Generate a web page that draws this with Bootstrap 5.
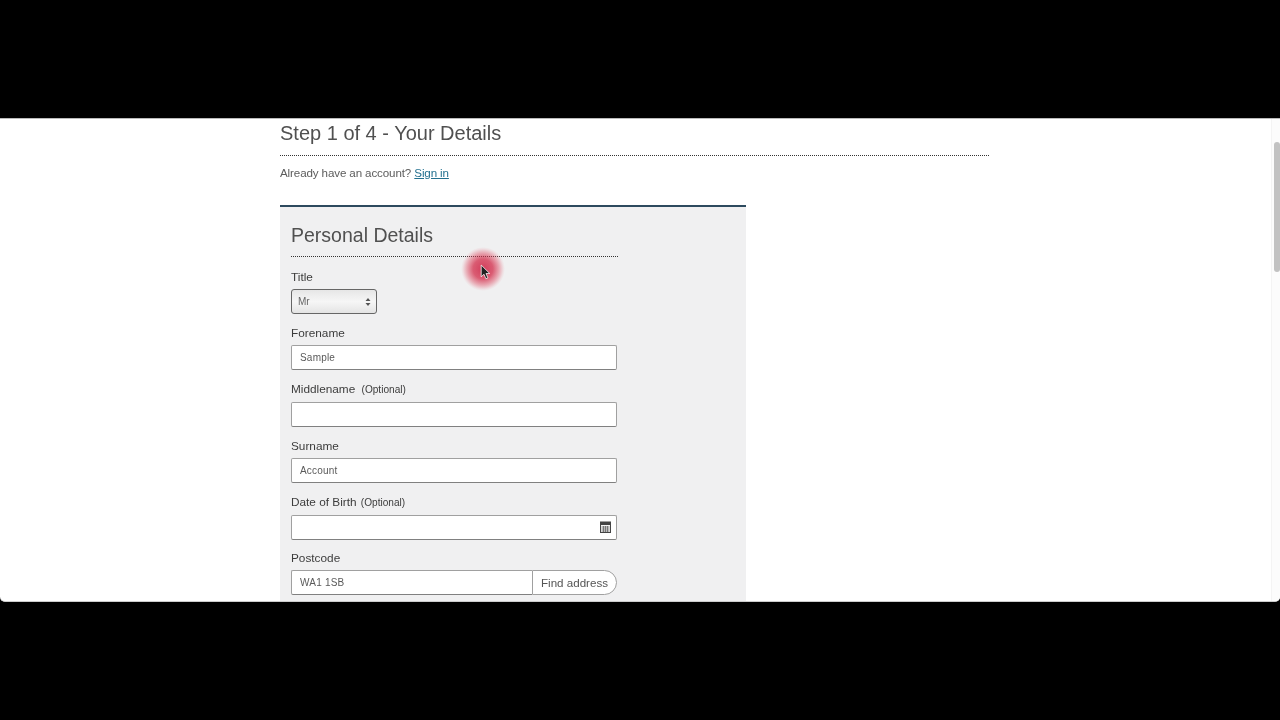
<!DOCTYPE html>
<html lang="en">
<head>
<meta charset="utf-8">
<title>Step 1 of 4 - Your Details</title>
<link rel="stylesheet" href="https://cdn.jsdelivr.net/npm/bootstrap@5.3.0/dist/css/bootstrap.min.css">
<style>
html, body { height: 720px; overflow: hidden; background: #000; }
body { font-family: "Liberation Sans", Arial, sans-serif; color: #444; }
.screen { margin-top: 118px; height: 484px; background: #fff; border-top: 1px solid #bbb; border-bottom: 1px solid #ccc; border-radius: 0 0 5px 5px; overflow: hidden; position: relative; filter: blur(.3px); }
.page-col { width: 709px; margin-left: 280px; }
.step-title { font-size: 20px; line-height: 28px; font-weight: 400; color: #505050; margin: 0; height: 36px; }
.dot-rule { border: 0; border-top: 1px dotted #333; opacity: 1; margin: 0; }
.account { font-size: 11.6px; line-height: 16px; margin: 9px 0 24px; color: #5c5c5c; letter-spacing: -.12px; }
.account a { color: #23708f; }
.panel-box { width: 466px; background: #f0f0f1; border-top: 2px solid #2d4a5e; padding: 14px 11px 0; height: 420px; }
.panel-inner { width: 327px; }
.panel-title { font-size: 19.5px; line-height: 28px; font-weight: 400; color: #505050; margin: 0; height: 35px; }
.field-label { display: block; font-size: 11.8px; line-height: 14px; color: #3c3c3c; margin: 0 0 5px; }
.field-label span { font-size: 10.1px; margin-left: 3px; }
.field-label .tight-note { margin-left: 1px; }
.field-block { height: 56.3px; }
.first-field { padding-top: 13px; height: 69px; }
.field-input { height: 25px; border: 1px solid #a0a0a0; border-bottom-color: #808080; border-radius: 2px; background: #fff; font-size: 10px; line-height: 23px; color: #5a5a5a; padding: 0 8px; letter-spacing: .2px; }
.field-width { width: 326px; }
.select-box { width: 86px; height: 25px; border: 1px solid #666; border-radius: 3px; background: linear-gradient(#e6e6e6, #f6f6f6 50%, #e4e4e4); font-size: 10px; color: #666; padding: 0 5px 0 6px; }
.addon-btn { width: 85px; height: 25px; border: 1px solid #a0a0a0; border-radius: 0 12.5px 12.5px 0; background: #fff; font-size: 11.6px; color: #555; line-height: 23px; text-align: center; flex: none; }
.postcode-input { border-right: 0; border-radius: 2px 0 0 2px; }
.date-input { padding-right: 5px; }
.scroll-track { position: absolute; top: 0; right: 0; width: 9px; height: 100%; background: #fcfcfc; border-left: 1px solid #f4f4f4; }
.scroll-thumb { position: absolute; top: 23px; left: 2px; width: 6px; height: 130px; background: #c2c2c2; border-radius: 3px; }
.click-halo { position: absolute; left: 460.5px; top: 128px; width: 44px; height: 44px; border-radius: 50%; background: radial-gradient(circle closest-side, rgba(205,30,65,.85) 0, rgba(210,40,70,.74) 45%, rgba(220,60,85,.42) 72%, rgba(230,90,110,.1) 92%, rgba(230,90,110,0) 100%); }
.cursor-arrow { position: absolute; left: 480px; top: 145px; }
</style>
</head>
<body>
<div class="screen">
  <div class="page-col">
    <h1 class="step-title">Step 1 of 4 - Your Details</h1>
    <hr class="dot-rule">
    <p class="account">Already have an account? <a href="#">Sign in</a></p>
    <div class="panel-box">
      <div class="panel-inner">
        <h2 class="panel-title">Personal Details</h2>
        <hr class="dot-rule">
        <div class="first-field">
          <label class="field-label">Title</label>
          <div class="select-box d-flex align-items-center justify-content-between">
            <span>Mr</span>
            <svg width="6" height="10" viewBox="0 0 6 10"><path d="M3 1 5.5 4H.5zM3 9 .5 6h5z" fill="#555"/></svg>
          </div>
        </div>
        <div class="field-block"><label class="field-label">Forename</label><div class="field-input field-width">Sample</div></div>
        <div class="field-block"><label class="field-label">Middlename <span>(Optional)</span></label><div class="field-input field-width"></div></div>
        <div class="field-block"><label class="field-label">Surname</label><div class="field-input field-width">Account</div></div>
        <div class="field-block">
          <label class="field-label">Date of Birth <span class="tight-note">(Optional)</span></label>
          <div class="field-input field-width date-input d-flex align-items-center justify-content-end">
            <svg width="11" height="12" viewBox="0 0 11 12"><rect x=".5" y="1" width="10" height="10.5" fill="#f4f4f4" stroke="#444"/><rect x="0" y="1" width="11" height="3" fill="#444"/><path d="M1.5 6h8M1.5 8h8M1.5 10h8M3.5 5v6M5.5 5v6M7.5 5v6" stroke="#666" stroke-width=".8" fill="none"/></svg>
          </div>
        </div>
        <div class="field-block">
          <label class="field-label">Postcode</label>
          <div class="d-flex field-width">
            <div class="field-input postcode-input flex-grow-1">WA1 1SB</div>
            <div class="addon-btn">Find address</div>
          </div>
        </div>
      </div>
    </div>
  </div>
  <div class="scroll-track"><div class="scroll-thumb"></div></div>
  <div class="click-halo"></div>
  <svg class="cursor-arrow" width="12" height="16" viewBox="0 0 11 15"><path d="M1 1v11l2.6-2.4 1.8 4.2 1.9-.8-1.8-4.1H9z" fill="#222" stroke="#fff" stroke-width=".7"/></svg>
</div>
<script src="https://cdn.jsdelivr.net/npm/bootstrap@5.3.0/dist/js/bootstrap.bundle.min.js"></script>
</body>
</html>
